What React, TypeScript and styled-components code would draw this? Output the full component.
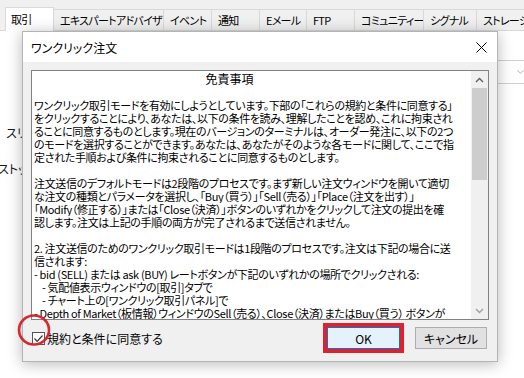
import React from "react";
import styled, { createGlobalStyle } from "styled-components";

const Global = createGlobalStyle`
  html, body { margin: 0; padding: 0; background: #ffffff; }
  body { font-family: "Noto Sans CJK JP", "Noto Sans", sans-serif; }
`;

const Page = styled.div`
  width: 524px;
  height: 378px;
  overflow: hidden;
  background: #ffffff;
  display: flex;
  flex-direction: column;
  font-family: "Noto Sans CJK JP", "Noto Sans", sans-serif;
  font-feature-settings: "palt";
  color: #000;
`;

const TabBar = styled.div`
  flex: none;
  height: 31px;
  background: #f0f0f0;
  display: flex;
  align-items: flex-end;
  padding-left: 5px;
  box-sizing: border-box;
  border-bottom: 1px solid #d9d9d9;
`;

const Tab = styled.div<{ $w: number; $active?: boolean }>`
  flex: none;
  width: ${(p) => p.$w}px;
  height: ${(p) => (p.$active ? 24 : 21)}px;
  margin-bottom: ${(p) => (p.$active ? -1 : 0)}px;
  box-sizing: border-box;
  border: 1px solid #d9d9d9;
  border-bottom: none;
  margin-right: -1px;
  background: ${(p) => (p.$active ? "#ffffff" : "#f0f0f0")};
  padding-left: ${(p) => (p.$active ? 5 : 6)}px;
  padding-bottom: ${(p) => (p.$active ? 2 : 0)}px;
  font-size: 11px;
  letter-spacing: -0.7px;
  display: flex;
  align-items: center;
  white-space: nowrap;
  overflow: hidden;
`;

const Workspace = styled.div`
  flex: 1;
  display: flex;
  align-items: flex-start;
`;

const LeftStrip = styled.div`
  flex: none;
  width: 22px;
  overflow: hidden;
  padding-top: 93px;
  display: flex;
  flex-direction: column;
  gap: 19px;
`;

const BackLabel = styled.div<{ $x: number }>`
  font-size: 12px;
  line-height: 17px;
  white-space: nowrap;
  margin-left: ${(p) => p.$x}px;
  color: #1a1a1a;
`;

const Dialog = styled.div`
  flex: none;
  position: relative;
  z-index: 1;
  width: 476px;
  height: 331px;
  box-sizing: border-box;
  border: 1px solid #b4b4b4;
  background: #f0f0f0;
  box-shadow: 0 2px 14px rgba(0, 0, 0, 0.28);
  display: flex;
  flex-direction: column;
`;

const TitleBar = styled.div`
  flex: none;
  height: 30px;
  background: #ffffff;
  display: flex;
  align-items: center;
  padding: 0 10px 0 8px;
`;

const Title = styled.div`
  flex: 1;
  font-size: 12px;
`;

const Body = styled.div`
  flex: 1;
  display: flex;
  flex-direction: column;
  padding: 8px 8px 5px 8px;
`;

const TextBox = styled.div`
  flex: none;
  height: 250px;
  box-sizing: border-box;
  border: 1px solid #828282;
  background: #ffffff;
  display: flex;
`;

const Content = styled.div`
  flex: 1;
  overflow: hidden;
  padding: 1px 2px 0 2px;
`;

const Heading = styled.div`
  font-size: 12px;
  line-height: 14px;
  text-align: center;
  padding-right: 44px;
  margin-bottom: 13px;
`;

const Line = styled.div<{ $indent?: number }>`
  font-size: 11px;
  letter-spacing: -0.35px;
  line-height: 13px;
  height: 13px;
  white-space: pre;
  overflow: hidden;
  padding-left: ${(p) => p.$indent ?? 0}px;
`;

const ScrollBar = styled.div`
  flex: none;
  width: 17px;
  background: #f0f0f0;
  display: flex;
  flex-direction: column;
`;

const ArrowBtn = styled.div`
  flex: none;
  height: 17px;
  display: flex;
  align-items: center;
  justify-content: center;
`;

const Thumb = styled.div`
  flex: none;
  height: 92px;
  margin: 0 1px;
  background: #cdcdcd;
`;

const Track = styled.div`
  flex: 1;
`;

const Footer = styled.div`
  flex: 1;
  display: flex;
  align-items: center;
`;

const CheckArea = styled.label`
  position: relative;
  display: flex;
  align-items: center;
  gap: 2px;
  margin-left: 1px;
  font-size: 12px;
`;

const CheckBox = styled.span`
  width: 13px;
  height: 13px;
  box-sizing: border-box;
  border: 1px solid #555;
  background: #fff;
  display: flex;
  align-items: center;
  justify-content: center;
`;

const RedRing = styled.svg`
  position: absolute;
  left: -15px;
  top: -16px;
  pointer-events: none;
`;

const Spacer = styled.div`
  flex: 1;
`;

const Highlight = styled.div`
  border: 4px solid #e0202a;
  display: flex;
`;

const Button = styled.button<{ $primary?: boolean }>`
  width: ${(p) => (p.$primary ? 73 : 72)}px;
  height: 22px;
  box-sizing: border-box;
  border: 1px solid ${(p) => (p.$primary ? "#0078d7" : "#adadad")};
  background: ${(p) => (p.$primary ? "#e5f1fb" : "#e1e1e1")};
  font-family: "Noto Sans CJK JP", "Noto Sans", sans-serif;
  font-feature-settings: "palt";
  font-size: 12px;
  color: #000;
  padding: 0;
  margin-left: ${(p) => (p.$primary ? 0 : 11)}px;
  margin-right: ${(p) => (p.$primary ? 0 : 2)}px;
`;

const RightStrip = styled.div`
  flex: 1;
  padding-top: 29px;
  overflow: hidden;
`;

const Combo = styled.div`
  height: 22px;
  border-top: 1px solid #d0d0d0;
  border-bottom: 1px solid #d0d0d0;
  display: flex;
  align-items: center;
  padding-left: 19px;
`;

const tabs: { label: string; w: number; active?: boolean }[] = [
  { label: "取引", w: 49, active: true },
  { label: "エキスパートアドバイザ", w: 111 },
  { label: "イベント", w: 49 },
  { label: "通知", w: 49 },
  { label: "Eメール", w: 48 },
  { label: "FTP", w: 49 },
  { label: "コミュニティー", w: 70 },
  { label: "シグナル", w: 54 },
  { label: "ストレージ", w: 70 },
];

const lines: { t: string; i?: number }[] = [
  { t: "ワンクリック取引モードを有効にしようとしています。下部の「これらの規約と条件に同意する」" },
  { t: "をクリックすることにより、あなたは、以下の条件を読み、理解したことを認め、これに拘束され" },
  { t: "ることに同意するものとします。現在のバージョンのターミナルは、オーダー発注に、以下の2つ" },
  { t: "のモードを選択することができます。あなたは、あなたがそのような各モードに関して、ここで指" },
  { t: "定された手順および条件に拘束されることに同意するものとします。" },
  { t: " " },
  { t: "注文送信のデフォルトモードは2段階のプロセスです。まず新しい注文ウィンドウを開いて適切" },
  { t: "な注文の種類とパラメータを選択し、「Buy（買う）」「Sell（売る）」「Place（注文を出す）」" },
  { t: "「Modify（修正する）」または「Close（決済）」ボタンのいずれかをクリックして注文の提出を確" },
  { t: "認します。注文は上記の手順の両方が完了されるまで送信されません。" },
  { t: " " },
  { t: "2. 注文送信のためのワンクリック取引モードは1段階のプロセスです。注文は下記の場合に送" },
  { t: "信されます:" },
  { t: "- bid (SELL) または ask (BUY) レートボタンが下記のいずれかの場所でクリックされる:" },
  { t: "- 気配値表示ウィンドウの[取引]タブで", i: 8 },
  { t: "- チャート上の[ワンクリック取引パネル]で", i: 8 },
  { t: "- Depth of Market（板情報）ウィンドウのSell（売る）、Close（決済）またはBuy（買う） ボタンが" },
];

export default function App() {
  return (
    <Page>
      <Global />
      <TabBar>
        {tabs.map((t) => (
          <Tab key={t.label} $w={t.w} $active={t.active}>
            {t.label}
          </Tab>
        ))}
      </TabBar>
      <Workspace>
        <LeftStrip>
          <BackLabel $x={6}>スリッページ</BackLabel>
          <BackLabel $x={-2}>ストップレベル</BackLabel>
        </LeftStrip>
        <Dialog>
          <TitleBar>
            <Title>ワンクリック注文</Title>
            <svg width="11" height="11" viewBox="0 0 11 11">
              <path d="M0.5 0.5 L10.5 10.5 M10.5 0.5 L0.5 10.5" stroke="#000" strokeWidth="1" fill="none" />
            </svg>
          </TitleBar>
          <Body>
            <TextBox>
              <Content>
                <Heading>免責事項</Heading>
                {lines.map((l, idx) => (
                  <Line key={idx} $indent={l.i}>
                    {l.t}
                  </Line>
                ))}
              </Content>
              <ScrollBar>
                <ArrowBtn>
                  <svg width="9" height="6" viewBox="0 0 9 6">
                    <path d="M1 5 L4.5 1.5 L8 5" stroke="#606060" strokeWidth="1.4" fill="none" />
                  </svg>
                </ArrowBtn>
                <Thumb />
                <Track />
                <ArrowBtn>
                  <svg width="9" height="6" viewBox="0 0 9 6">
                    <path d="M1 1 L4.5 4.5 L8 1" stroke="#a0a0a0" strokeWidth="1.4" fill="none" />
                  </svg>
                </ArrowBtn>
              </ScrollBar>
            </TextBox>
            <Footer>
              <CheckArea>
                <CheckBox>
                  <svg width="11" height="11" viewBox="0 0 11 11">
                    <path d="M1.5 5.5 L4.2 8.3 L9.5 2.5" stroke="#333" strokeWidth="1.2" fill="none" />
                  </svg>
                </CheckBox>
                規約と条件に同意する
                <RedRing width="34" height="32" viewBox="0 0 34 32">
                  <ellipse cx="17" cy="16" rx="15" ry="14.5" stroke="#d62830" strokeWidth="2.6" fill="none" />
                </RedRing>
              </CheckArea>
              <Spacer />
              <Highlight>
                <Button $primary>OK</Button>
              </Highlight>
              <Button>キャンセル</Button>
            </Footer>
          </Body>
        </Dialog>
        <RightStrip>
          <Combo>
            <svg width="8" height="6" viewBox="0 0 8 6">
              <path d="M0.5 1 L4 4.5 L7.5 1" stroke="#a8a8a8" strokeWidth="1" fill="none" />
            </svg>
          </Combo>
        </RightStrip>
      </Workspace>
    </Page>
  );
}
